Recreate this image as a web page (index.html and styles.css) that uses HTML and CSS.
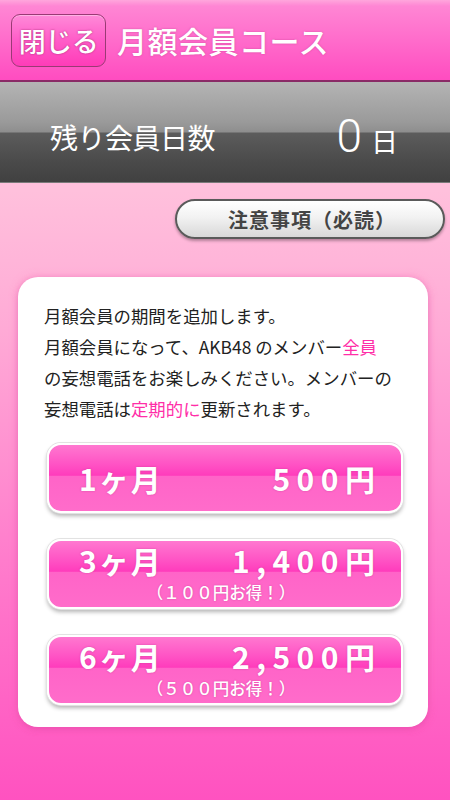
FILE: index.html
```html
<!DOCTYPE html>
<html lang="ja">
<head>
<meta charset="utf-8">
<link rel="stylesheet" href="styles.css">
</head>
<body>
<div class="page">
  <header class="header">
    <div class="close">閉じる</div>
    <h1 class="title">月額会員コース</h1>
  </header>
  <section class="days">
    <span class="days-label">残り会員日数</span>
    <span class="days-value"><span class="num">0</span><span class="unit">日</span></span>
  </section>
  <div class="notice-row">
    <div class="notice">注意事項（必読）</div>
  </div>
  <main class="card">
    <p class="desc">月額会員の期間を追加します。<br>月額会員になって、AKB48 のメンバー<span class="hl">全員</span><br>の妄想電話をお楽しみください。メンバーの<br>妄想電話は<span class="hl">定期的に</span>更新されます。</p>
    <div class="plan plan-single">
      <div class="plan-main"><span class="plan-term">1ヶ月</span><span class="plan-price">500円</span></div>
    </div>
    <div class="plan">
      <div class="plan-main"><span class="plan-term">3ヶ月</span><span class="plan-price">1,400円</span></div>
      <div class="plan-sub">（１００円お得！）</div>
    </div>
    <div class="plan">
      <div class="plan-main"><span class="plan-term">6ヶ月</span><span class="plan-price">2,500円</span></div>
      <div class="plan-sub">（５００円お得！）</div>
    </div>
  </main>
</div>
</body>
</html>
```
FILE: styles.css
```css
html, body {
  margin: 0;
  padding: 0;
}
body {
  width: 450px;
  height: 800px;
  overflow: hidden;
  font-family: "Noto Sans CJK JP", "Noto Sans", sans-serif;
  background: linear-gradient(to bottom, #ffc4de 0px, #ffc0dc 190px, #ffaad6 330px, #ff7ccc 560px, #ff52c0 800px);
}
.page {
  width: 450px;
  height: 800px;
  display: flex;
  flex-direction: column;
}
.header {
  height: 82px;
  box-sizing: border-box;
  display: flex;
  align-items: center;
  padding-left: 11px;
  background: linear-gradient(to bottom, #ffa6dc 0px, #ff86d4 6px, #ff6ccb 40px, #ff4cc0 80px);
  border-bottom: 2px solid #8a2a66;
}
.close {
  width: 95px;
  height: 53px;
  box-sizing: border-box;
  display: flex;
  align-items: center;
  justify-content: center;
  border: 1.5px solid #9a3a74;
  border-radius: 9px;
  background: linear-gradient(to bottom, #ff8ad8 0%, #ff5cc8 50%, #ff3cb8 100%);
  color: #fff;
  font-size: 27px;
  font-weight: 500;
  letter-spacing: -0.5px;
  text-shadow: 0 0 2px #a02a70;
  box-shadow: inset 0 1px 0 rgba(255,255,255,0.35);
}
.title {
  margin: 0 0 0 11px;
  color: #fff;
  font-size: 30px;
  font-weight: 500;
  letter-spacing: 0.5px;
  text-shadow: 0 0 2px rgba(170,40,120,0.5);
}
.days {
  height: 101px;
  box-sizing: border-box;
  display: flex;
  align-items: center;
  justify-content: space-between;
  padding: 9px 52px 0 50px;
  background: linear-gradient(to bottom, #b4b4b4 0px, #9a9a9a 40px, #8e8e8e 50px, #5c5c5c 51px, #4a4a4a 80px, #404040 101px);
  border-bottom: 1px solid #7a7a7a;
  color: #fff;
}
.days-label {
  font-size: 28px;
  letter-spacing: -0.5px;
}
.days-value {
  display: flex;
  align-items: baseline;
}
.num {
  font-family: "Roboto", "Noto Sans", sans-serif;
  font-weight: 300;
  font-size: 46px;
  line-height: 1;
}
.unit {
  font-size: 27px;
  margin-left: 9px;
}
.notice-row {
  display: flex;
  justify-content: flex-end;
  padding: 16px 5px 0 0;
}
.notice {
  width: 270px;
  height: 40px;
  box-sizing: border-box;
  display: flex;
  align-items: center;
  justify-content: center;
  border: 2px solid #5a5a5a;
  border-radius: 20px;
  background: linear-gradient(to bottom, #ffffff 0%, #f2f2f2 45%, #d8d8d8 100%);
  box-shadow: 0 2px 3px rgba(0,0,0,0.3);
  color: #444;
  font-size: 20px;
  font-weight: 700;
  letter-spacing: 1px;
  padding-left: 4px;
}
.card {
  margin: 38px 0 0 18px;
  width: 410px;
  height: 450px;
  box-sizing: border-box;
  background: #fff;
  border-radius: 20px;
  box-shadow: 0 2px 6px rgba(200,40,140,0.35), 0 0 10px rgba(255,120,190,0.35);
  padding: 23px 0 0 26px;
  display: flex;
  flex-direction: column;
}
.desc {
  margin: 0;
  font-size: 17.4px;
  line-height: 31px;
  color: #222;
  white-space: nowrap;
}
.hl {
  color: #ff2ea8;
}
.plan {
  margin: 19px 0 0 3px;
  width: 356px;
  height: 70px;
  box-sizing: border-box;
  border: 2.5px solid #fff;
  border-radius: 14px;
  box-shadow: 0 0 0 1px #e2e2e2, 0 3px 4px rgba(0,0,0,0.3);
  background: linear-gradient(to bottom, #ff78d0 0%, #ff52c4 30%, #ff3cbc 46%, #ff64c8 47%, #ff6cca 100%);
  color: #fff;
  display: flex;
  flex-direction: column;
  justify-content: center;
}
.plan + .plan {
  margin-top: 26px;
}
.plan-main {
  display: flex;
  justify-content: space-between;
  align-items: center;
  padding: 0 26px 0 30px;
  font-size: 30px;
  font-weight: 700;
  line-height: 30px;
  text-shadow: 0 0 2px rgba(160,30,110,0.45);
}
.plan-term {
  letter-spacing: 2px;
}
.plan-price {
  letter-spacing: 6.5px;
  margin-right: -6.5px;
}
.plan-sub {
  text-align: center;
  font-size: 16.5px;
  line-height: 22px;
  font-weight: 500;
  margin-top: 6px;
  margin-left: -8px;
  text-shadow: 0 0 2px rgba(160,30,110,0.4);
}
```
